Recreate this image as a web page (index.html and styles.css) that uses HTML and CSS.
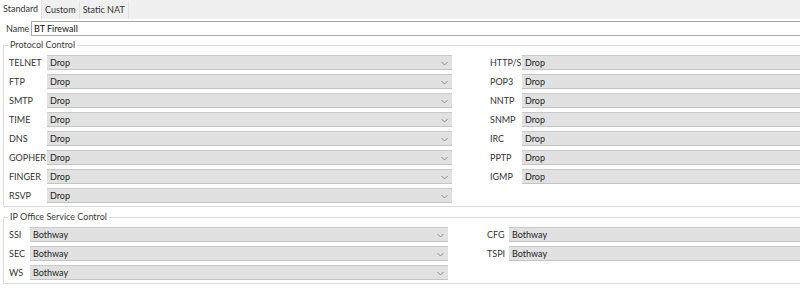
FILE: index.html
```html
<!DOCTYPE html>
<html lang="en">
<head>
    <meta charset="UTF-8">
    <title>Firewall Profile</title>
    <link rel="stylesheet" href="styles.css">
</head>
<body>
    <div class="tabs">
        <span class="tab active">Standard</span>
        <span class="tab">Custom</span>
        <span class="tab">Static NAT</span>
    </div>

    <div class="name-row">
        <label class="name-label">Name</label>
        <div class="text-input">BT Firewall</div>
    </div>

    <fieldset class="group protocol">
        <legend>Protocol Control</legend>
        <div class="grid" id="protocolGrid"></div>
    </fieldset>

    <fieldset class="group service">
        <legend>IP Office Service Control</legend>
        <div class="grid" id="serviceGrid"></div>
    </fieldset>

    <script>
        const protocols = [
            ['TELNET', 'HTTP/S'],
            ['FTP', 'POP3'],
            ['SMTP', 'NNTP'],
            ['TIME', 'SNMP'],
            ['DNS', 'IRC'],
            ['GOPHER', 'PPTP'],
            ['FINGER', 'IGMP'],
            ['RSVP', null],
        ];

        const services = [
            ['SSI', 'CFG'],
            ['SEC', 'TSPI'],
            ['WS', null],
        ];

        const chevron = '<svg class="chevron" width="7" height="5" viewBox="0 0 7 5"><path d="M0.5 1 L3.5 4 L6.5 1" fill="none" stroke="#8a8a8a" stroke-width="1"/></svg>';

        function cell(label, value, withArrow) {
            const wrap = document.createElement('div');
            wrap.classList.add('field');
            if (label) {
                wrap.innerHTML = '<span class="field-label">' + label + '</span>' +
                    '<div class="combo"><span>' + value + '</span>' + (withArrow ? chevron : '') + '</div>';
            }
            return wrap;
        }

        // Build the two column grids
        function build(gridId, rows, value) {
            const grid = document.getElementById(gridId);
            rows.forEach(row => {
                grid.appendChild(cell(row[0], value, true));
                grid.appendChild(cell(row[1], value, false));
            });
        }

        build('protocolGrid', protocols, 'Drop');
        build('serviceGrid', services, 'Bothway');
    </script>
</body>
</html>
```

FILE: styles.css
```css
body {
    font-family: Lato, "Noto Sans", Arial, sans-serif;
    font-size: 9px;
    color: #333;
    margin: 0;
    padding: 0;
    width: 800px;
    height: 302px;
    overflow: hidden;
    background-color: #fff;
}

/* tabs */

.tabs {
    display: flex;
    height: 19px;
    background-color: #f0f0f0;
    align-items: flex-end;
}

.tab {
    padding: 0 3px;
    height: 18px;
    line-height: 17px;
    border-right: 1px solid #e2e2e2;
}

.tab.active {
    background-color: #fff;
    height: 19px;
    line-height: 18px;
}

/* name */

.name-row {
    display: flex;
    align-items: center;
    margin-top: 2px;
}

.name-label {
    width: 25px;
    padding-left: 6px;
}

.text-input {
    flex: 1;
    height: 13px;
    line-height: 13px;
    border: 1px solid #a8a8a8;
    border-right: none;
    padding-left: 2px;
    color: #111;
}

/* groups */

.group {
    min-width: 0;
    margin: 3px 0 0 3px;
    padding: 4px 0 3px 5px;
    border: 1px solid #dcdcdc;
    border-right: none;
}

.group legend {
    padding: 0 2px;
    margin-left: -1px;
    line-height: 12px;
    color: #3a3a3a;
}

.service {
    margin-top: 4px;
}

.grid {
    display: grid;
    row-gap: 4px;
}

.protocol .grid {
    grid-template-columns: 443px 1fr;
}

.service .grid {
    grid-template-columns: 442px 1fr;
}

.field {
    display: flex;
    align-items: center;
    height: 15px;
}

.field-label {
    flex: none;
}

.combo {
    box-sizing: border-box;
    height: 15px;
    display: flex;
    align-items: center;
    justify-content: space-between;
    padding: 0 4px 0 3px;
    background-color: #e1e1e1;
    border-top: 1px solid #c9c9c9;
    border-bottom: 1px solid #c4c4c4;
    color: #222;
}

.chevron {
    margin-top: 1px;
}

/* column widths */

.protocol .field:nth-child(odd) .field-label { width: 38px; }
.protocol .field:nth-child(odd) .combo { width: 406px; }
.protocol .field:nth-child(even) { padding-left: 38px; }
.protocol .field:nth-child(even) .field-label { width: 32px; }
.protocol .field:nth-child(even) .combo { flex: 1; }

.service .field:nth-child(odd) .field-label { width: 21px; }
.service .field:nth-child(odd) .combo { width: 418px; }
.service .field:nth-child(even) { padding-left: 36px; }
.service .field:nth-child(even) .field-label { width: 22px; }
.service .field:nth-child(even) .combo { flex: 1; }
```
